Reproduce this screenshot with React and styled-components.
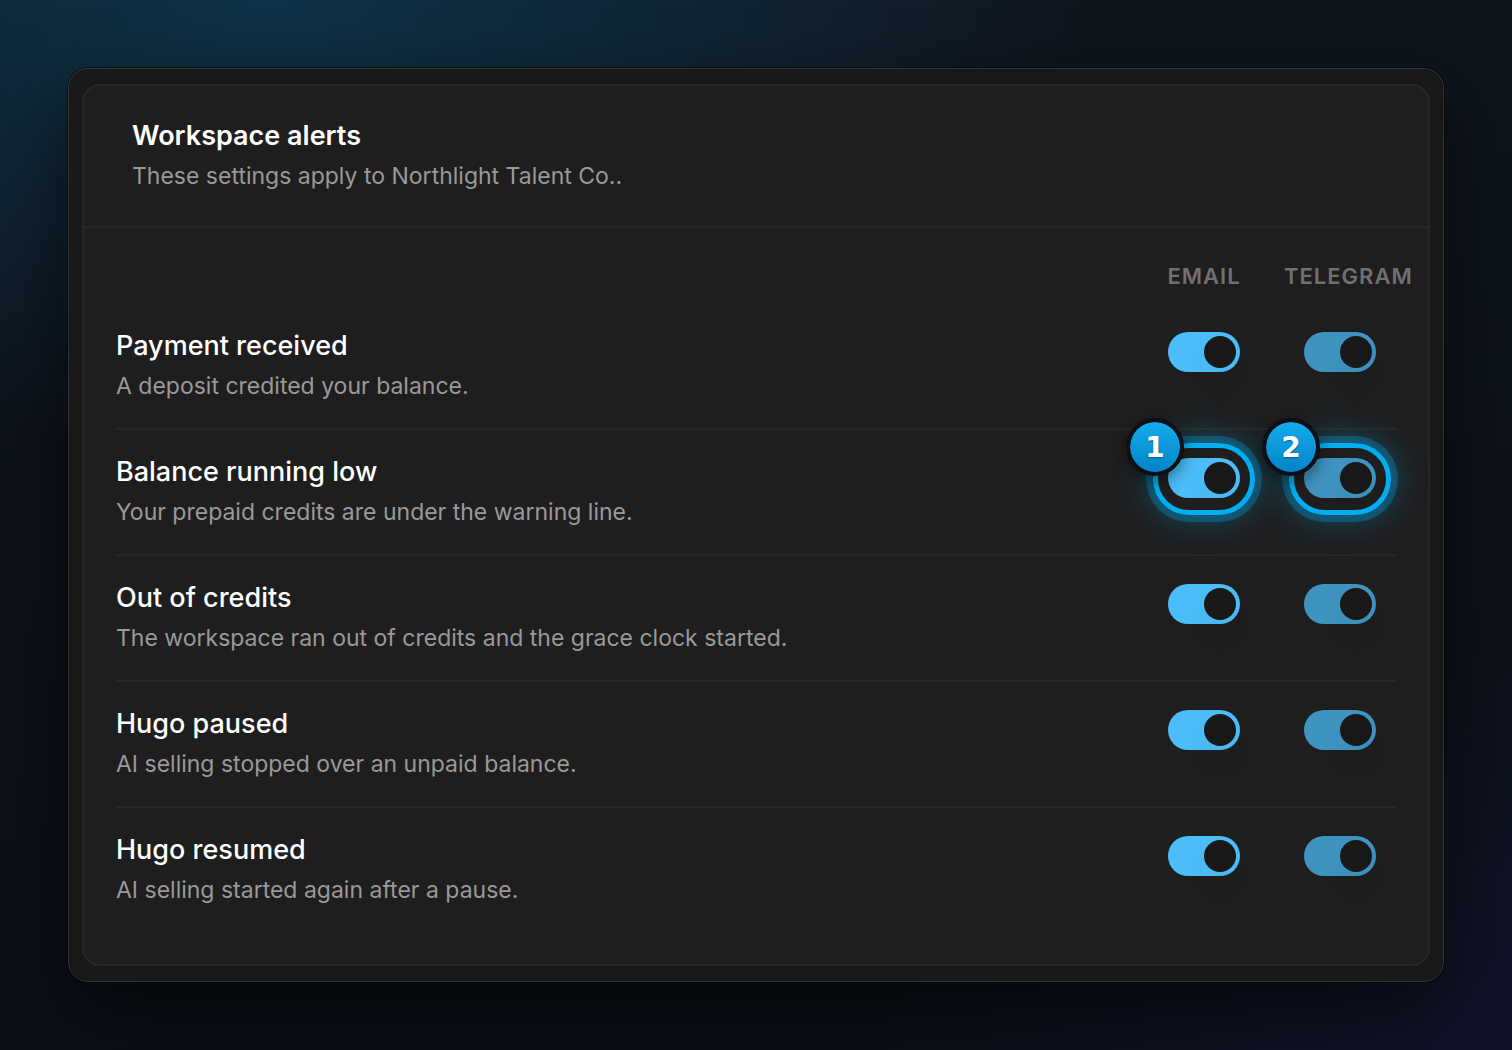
import React, { useState } from "react";
import styled, { createGlobalStyle } from "styled-components";

const GlobalStyle = createGlobalStyle`
  * {
    box-sizing: border-box;
  }
  body {
    margin: 0;
    background: #0b0f17;
    color: #fff;
    font-family: Inter, "Liberation Sans", sans-serif;
  }
`;

const Backdrop = styled.main`
  min-height: 100vh;
  padding: 68px;
  overflow: hidden;
  background:
    radial-gradient(1100px 600px at 18% 0%, rgba(14, 116, 165, 0.3), transparent 75%),
    radial-gradient(900px 600px at 100% 100%, rgba(49, 46, 129, 0.18), transparent 70%),
    linear-gradient(180deg, #10161e 0%, #0b0f17 100%);
`;

const Frame = styled.div`
  padding: 15px 13px;
  border: 1px solid #343434;
  border-radius: 20px;
  background: #181818;
  box-shadow:
    0 0 0 1px rgba(0, 0, 0, 0.5),
    0 30px 80px rgba(0, 0, 0, 0.6);
`;

const Card = styled.section`
  border: 2px solid #262626;
  border-radius: 18px;
  background: #1e1e1e;
`;

const CardHeader = styled.header`
  padding: 32px 48px;
  border-bottom: 2px solid #262626;
`;

const CardTitle = styled.h2`
  margin: 0 0 4px;
  font-size: 27px;
  font-weight: 600;
  line-height: 36px;
`;

const Description = styled.p`
  margin: 0;
  color: #999;
  font-size: 23px;
  line-height: 36px;
`;

const CardBody = styled.div`
  padding: 32px;
`;

const AlertTable = styled.table`
  width: 100%;
  table-layout: fixed;
  border-spacing: 0;
`;

const ColumnHeading = styled.th`
  width: ${({ $wide }) => ($wide ? "auto" : "136px")};
  padding: 0 0 12px 24px;
  color: #707070;
  font-size: 22px;
  font-weight: 600;
  letter-spacing: 1px;
  line-height: 32px;
  text-align: center;
  text-transform: uppercase;
  white-space: nowrap;
`;

const AlertRow = styled.tr`
  &:not(:last-child) > * {
    border-bottom: 2px solid #262626;
  }
`;

const AlertCell = styled.th`
  padding: 24px 0;
  font-weight: 400;
  text-align: left;
`;

const AlertName = styled.div`
  margin-bottom: 4px;
  font-size: 27px;
  font-weight: 500;
  line-height: 36px;
`;

const SwitchCell = styled.td`
  padding: 28px 0 24px 24px;
  text-align: center;
  vertical-align: top;
`;

const SwitchHolder = styled.span`
  position: relative;
  display: inline-flex;
`;

const Switch = styled.input`
  appearance: none;
  display: flex;
  width: 72px;
  height: 40px;
  margin: 0;
  padding: 4px;
  border-radius: 20px;
  background: ${({ $muted }) => ($muted ? "#3f93c1" : "#4bbdf9")};
  cursor: pointer;

  &::before {
    content: "";
    width: 32px;
    height: 32px;
    border-radius: 50%;
    background: #181818;
    box-shadow: 0 20px 30px rgba(0, 0, 0, 0.06);
  }
  &:checked {
    justify-content: flex-end;
  }
  &:not(:checked) {
    background: #444;
  }
`;

const HighlightRing = styled.span`
  position: absolute;
  inset: -15px -15px -17px;
  border: 5px solid #00aeef;
  border-radius: 36px;
  box-shadow:
    0 0 0 7px rgba(0, 174, 239, 0.28),
    0 0 32px 4px rgba(0, 174, 239, 0.36);
  pointer-events: none;
`;

const StepBadge = styled.span`
  position: absolute;
  top: -40px;
  left: -42px;
  width: 58px;
  height: 58px;
  border: 4px solid #0b0f17;
  border-radius: 50%;
  background: linear-gradient(180deg, #14abec, #0284c7) padding-box;
  box-shadow: 0 6px 16px rgba(0, 0, 0, 0.4);
  font-family: "DejaVu Sans", sans-serif;
  font-size: 28px;
  font-weight: 700;
  line-height: 52px;
  text-align: center;
  text-shadow: 0 1px 2px rgba(0, 0, 0, 0.35);
  pointer-events: none;
`;

const channels = ["Email", "Telegram"];

const alerts = [
  { name: "Payment received", text: "A deposit credited your balance." },
  {
    name: "Balance running low",
    text: "Your prepaid credits are under the warning line.",
    highlighted: true,
  },
  {
    name: "Out of credits",
    text: "The workspace ran out of credits and the grace clock started.",
  },
  { name: "Hugo paused", text: "AI selling stopped over an unpaid balance." },
  { name: "Hugo resumed", text: "AI selling started again after a pause." },
];

const ChannelSwitch = ({ label, muted, step }) => {
  const [checked, setChecked] = useState(true);

  return (
    <SwitchHolder>
      <Switch
        type="checkbox"
        role="switch"
        aria-label={label}
        $muted={muted}
        checked={checked}
        onChange={() => setChecked(!checked)}
      />
      {step && (
        <>
          <HighlightRing />
          <StepBadge>{step}</StepBadge>
        </>
      )}
    </SwitchHolder>
  );
};

const App = () => (
  <>
    <GlobalStyle />
    <Backdrop>
      <Frame>
        <Card>
          <CardHeader>
            <CardTitle>Workspace alerts</CardTitle>
            <Description>
              These settings apply to Northlight Talent Co..
            </Description>
          </CardHeader>
          <CardBody>
            <AlertTable>
              <thead>
                <tr>
                  <ColumnHeading as="td" $wide />
                  {channels.map((channel) => (
                    <ColumnHeading key={channel} scope="col">
                      {channel}
                    </ColumnHeading>
                  ))}
                </tr>
              </thead>
              <tbody>
                {alerts.map((alert) => (
                  <AlertRow key={alert.name}>
                    <AlertCell scope="row">
                      <AlertName>{alert.name}</AlertName>
                      <Description>{alert.text}</Description>
                    </AlertCell>
                    {channels.map((channel, index) => (
                      <SwitchCell key={channel}>
                        <ChannelSwitch
                          label={`${alert.name}: ${channel}`}
                          muted={channel === "Telegram"}
                          step={alert.highlighted && index + 1}
                        />
                      </SwitchCell>
                    ))}
                  </AlertRow>
                ))}
              </tbody>
            </AlertTable>
          </CardBody>
        </Card>
      </Frame>
    </Backdrop>
  </>
);

export default App;
